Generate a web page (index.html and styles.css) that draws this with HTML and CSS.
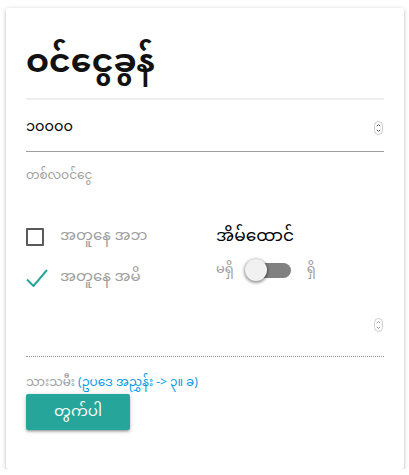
FILE: index.html
```html
<!DOCTYPE html>
<html lang="my">
<head>
<meta charset="utf-8">
<link rel="stylesheet" href="styles.css">
</head>
<body>
<div class="card">
  <h1 class="title">ဝင်ငွေခွန်</h1>
  <div class="divider"></div>
  <div class="field">
    <span class="field-value">၁၀၀၀၀</span>
    <svg class="spinner" width="9" height="14" viewBox="0 0 9 14"><rect x="0.5" y="0.5" width="8" height="13" rx="4" fill="#fff" stroke="#c8c8c8"/><path d="M2.8 5.2 L4.5 3.5 L6.2 5.2 M2.8 8.8 L4.5 10.5 L6.2 8.8" fill="none" stroke="#555" stroke-width="1"/></svg>
  </div>
  <div class="field-label">တစ်လဝင်ငွေ</div>
  <div class="options">
    <div class="col-left">
      <div class="check-row">
        <span class="box"></span>
        <span class="check-text">အတူနေ အဘ</span>
      </div>
      <div class="check-row">
        <svg class="tick" width="22" height="18" viewBox="0 0 22 18"><path d="M1 10.5 L7.5 17 L21 1" fill="none" stroke="#26a69a" stroke-width="2"/></svg>
        <span class="check-text">အတူနေ အမိ</span>
      </div>
    </div>
    <div class="col-right">
      <div class="switch-title">အိမ်ထောင်</div>
      <div class="switch-row">
        <span class="switch-text">မရှိ</span>
        <span class="lever"><span class="knob"></span></span>
        <span class="switch-text">ရှိ</span>
      </div>
    </div>
  </div>
  <div class="field field-disabled">
    <span class="field-value"></span>
    <svg class="spinner" width="9" height="14" viewBox="0 0 9 14"><rect x="0.5" y="0.5" width="8" height="13" rx="4" fill="#fff" stroke="#d0d0d0"/><path d="M2.8 5.2 L4.5 3.5 L6.2 5.2 M2.8 8.8 L4.5 10.5 L6.2 8.8" fill="none" stroke="#999" stroke-width="1"/></svg>
  </div>
  <div class="hint">သားသမီး <a class="hint-link" href="#">(ဥပဒေ အညွှန်း -&gt; ၃။ ခ)</a></div>
  <button class="btn">တွက်ပါ</button>
</div>
</body>
</html>
```

FILE: styles.css
```css
html, body {
  margin: 0;
  padding: 0;
  background: #fff;
}
body {
  font-family: "Noto Sans Myanmar", "Padauk", "Myanmar Text", "Noto Sans", sans-serif;
  color: rgba(0,0,0,0.87);
}
.card {
  box-sizing: border-box;
  width: 398px;
  height: 461px;
  margin: 8px 0 0 6px;
  padding: 20px;
  background: #fff;
  border-radius: 2px;
  box-shadow: 0 2px 2px 0 rgba(0,0,0,0.14), 0 3px 1px -2px rgba(0,0,0,0.12), 0 1px 5px 0 rgba(0,0,0,0.2);
  display: flex;
  flex-direction: column;
  align-items: flex-start;
}
.title {
  margin: 0;
  height: 70px;
  line-height: 72px;
  font-size: 33px;
  font-weight: 700;
  color: #111;
  white-space: nowrap;
}
.divider {
  align-self: stretch;
  border-top: 2px solid #eee;
}
.field {
  align-self: stretch;
  box-sizing: border-box;
  height: 52px;
  border-bottom: 1px solid #9e9e9e;
  display: flex;
  align-items: center;
  justify-content: space-between;
  padding-top: 4px;
}
.field-value {
  font-size: 14.5px;
  color: #000;
}
.spinner {
  margin-right: 1px;
  display: block;
}
.field-label {
  height: 48px;
  display: flex;
  align-items: center;
  font-size: 12px;
  color: #9e9e9e;
}
.options {
  align-self: stretch;
  height: 93px;
  display: flex;
  padding-top: 24px;
  box-sizing: border-box;
}
.col-left {
  width: 190px;
  display: flex;
  flex-direction: column;
  gap: 16px;
}
.check-row {
  display: flex;
  align-items: center;
  height: 25px;
}
.box {
  box-sizing: border-box;
  width: 18px;
  height: 18px;
  border: 2px solid #5a5a5a;
  border-radius: 1px;
  margin-right: 16px;
}
.tick {
  display: block;
  width: 22px;
  margin-right: 12px;
}
.check-text {
  font-size: 15px;
  color: #9e9e9e;
}
.col-right {
  display: flex;
  flex-direction: column;
  gap: 8px;
}
.switch-title {
  height: 25px;
  display: flex;
  align-items: center;
  font-size: 17px;
  color: #000;
}
.switch-row {
  display: flex;
  align-items: center;
  height: 26px;
}
.switch-text {
  font-size: 13px;
  color: #9e9e9e;
}
.lever {
  position: relative;
  width: 42px;
  height: 15px;
  border-radius: 8px;
  background: #818181;
  margin: 0 16px 0 15px;
}
.knob {
  position: absolute;
  left: -4px;
  top: -3.5px;
  width: 22px;
  height: 22px;
  border-radius: 50%;
  background: #f1f1f1;
  box-shadow: 0 1px 3px 1px rgba(0,0,0,0.4);
}
.field-disabled {
  height: 64px;
  border-bottom: 1px dotted rgba(0,0,0,0.42);
  padding-top: 0;
}
.hint {
  margin-top: 15px;
  height: 22px;
  display: flex;
  align-items: center;
  font-size: 12px;
  color: #9e9e9e;
  white-space: pre;
}
.hint-link {
  color: #039be5;
  text-decoration: none;
}
.btn {
  margin-top: 0;
  width: 104px;
  height: 36px;
  border: none;
  border-radius: 2px;
  background: #26a69a;
  color: #fff;
  font-family: inherit;
  font-size: 15px;
  padding: 0;
  box-shadow: 0 2px 2px 0 rgba(0,0,0,0.14), 0 3px 1px -2px rgba(0,0,0,0.12), 0 1px 5px 0 rgba(0,0,0,0.2);
}
```
